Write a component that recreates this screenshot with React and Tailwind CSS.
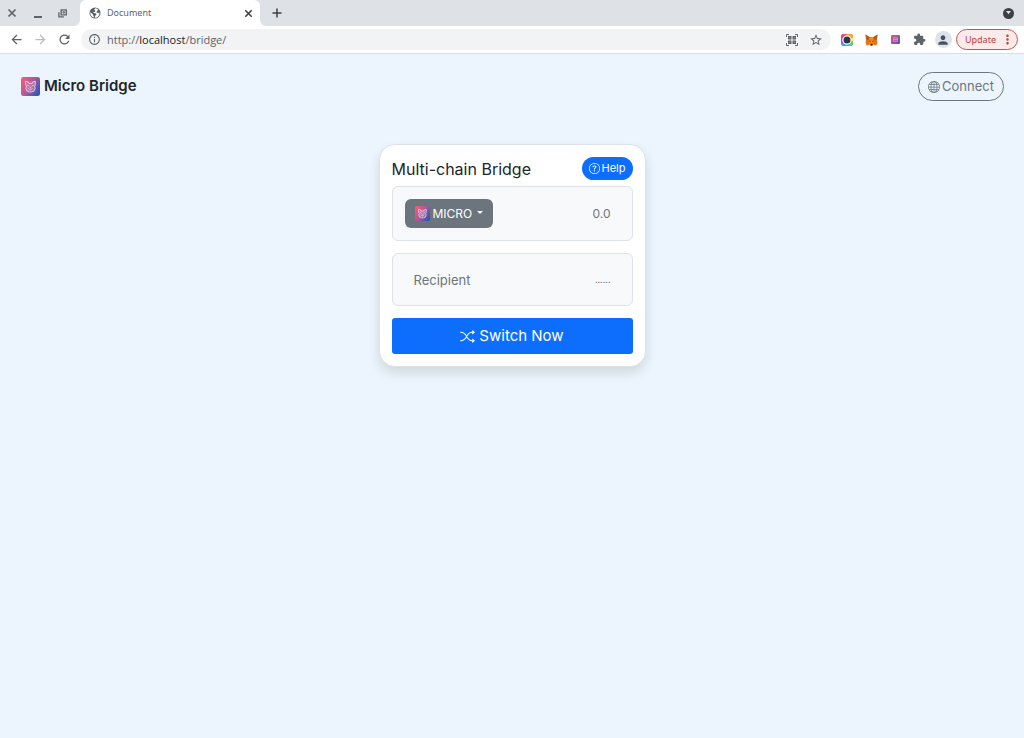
import React, { useState } from 'react';
import { BsGlobe, BsQuestionCircle, BsShuffle } from 'react-icons/bs';
import {
    MdArrowBack,
    MdArrowForward,
    MdRefresh,
    MdExtension,
    MdPerson,
    MdMoreVert,
    MdOutlineInfo,
    MdStarOutline
} from 'react-icons/md';

const TOKENS = ['MICRO'];

const MicroLogo = ({ id, className }) => (
    <svg viewBox="0 0 20 20" className={className} aria-hidden="true">
        <defs>
            <linearGradient id={id} x1="0" y1="0.2" x2="1" y2="0.8">
                <stop offset="0" stopColor="#f8567c" />
                <stop offset="0.5" stopColor="#a75a98" />
                <stop offset="1" stopColor="#2458b8" />
            </linearGradient>
        </defs>
        <rect width="20" height="20" rx="2.5" fill={`url(#${id})`} />
        <path d="M5 4.5h10v11H5z" fill="#f3d9ea" fillOpacity="0.2" />
        <g fill="none" stroke="#f3d9ea" strokeWidth="0.9" strokeLinecap="round" strokeLinejoin="round">
            <path d="M5 4.5l2.5.7.8 1.700h3.400l.8-1.700 2.500-.7v4l-.8 1.500.8 2-1.500 2.800-2 .9h-3l-2-.9L5 12l.8-2L5 8.500z" />
            <path d="M7 8.800l1.500.7M13 8.800l-1.500.7M8 12.300c1 1.400 3 1.400 4 0M9.500 11.300h1" />
        </g>
    </svg>
);

const CrossIcon = ({ className }) => (
    <svg viewBox="0 0 12 12" className={className} fill="none" stroke="currentColor" strokeWidth="1.7" aria-hidden="true">
        <path d="M2.500 2.500l7 7M9.500 2.500l-7 7" />
    </svg>
);

const PlusIcon = () => (
    <svg viewBox="0 0 14 14" className="size-[14px]" fill="none" stroke="#3c4043" strokeWidth="1.5" aria-hidden="true">
        <path d="M7 2.500v9M2.500 7h9" />
    </svg>
);

const FoxIcon = () => (
    <svg viewBox="0 0 24 22" className="h-3 w-[13px]" aria-hidden="true">
        <path fill="#e2761b" d="M1 1l8 5h6l8-5-1 9 1 6-2 5-6-1-2 2h-2l-2-2-6 1-2-5 1-6z" />
        <path fill="#b85b1c" d="M1 1l8 5-2 5-5-1zM23 1l-8 5 2 5 5-1z" />
        <path fill="#f6851b" d="M9 6h6l2 6-2 7H9l-2-7z" />
        <path fill="#322b2a" d="M7 12l3 1v2zM17 12l-3 1v2zM10 18h4l-.5 3h-3z" />
        <path fill="#d7c1b3" d="M5 20l4-1 1 2zM19 20l-4-1-1 2z" />
    </svg>
);

const WheelIcon = () => (
    <svg viewBox="0 0 24 24" className="size-3" aria-hidden="true">
        <rect width="24" height="24" rx="6" fill="#b446e8" />
        <path d="M12 12L0 5a5 5 0 0 1 5-5h7z" fill="#f34a6b" />
        <path d="M12 12L11 0h8a5 5 0 0 1 5 5v4z" fill="#ff9d2e" />
        <path d="M12 12L24 7v9z" fill="#ffe04a" />
        <path d="M12 12l12 2v5a5 5 0 0 1-5 5h-4z" fill="#55cf70" />
        <path d="M12 12l4 12H5a5 5 0 0 1-4-3z" fill="#31a9f5" />
        <circle cx="12" cy="12" r="9.5" fill="#fff" />
        <circle cx="12" cy="12" r="7" fill="#2c3540" />
    </svg>
);

const QrIcon = () => (
    <svg viewBox="0 0 12 12" className="size-3" fill="none" stroke="#5f6368" aria-hidden="true">
        <path d="M.5 3V.5H3M9 .5h2.500V3M11.500 9v2.500H9M3 11.500H.5V9" />
        <path fill="#5f6368" stroke="none" d="M2 2h3.500v3.500H2zM6.500 2H10v3.500H6.500zM2 6.500h3.500V10H2zM6.500 6.500H10V10H6.500z" />
        <path stroke="#b8babd" strokeWidth="0.8" d="M3.300 3.800h1M7.800 3.800h1M3.300 8.200h1M7.800 8.200h1" />
    </svg>
);

const PageIcon = () => (
    <svg viewBox="0 0 12 12" className="size-3" aria-hidden="true">
        <circle cx="6" cy="6" r="5.5" fill="#5f6368" />
        <path
            fill="#fff"
            d="M6.300 1.300L5.200 2.700l1.300 1-.8 1.300H4.400l.3 1.100 2.200.2.6 1.400-1.300 1-.4 2a4.700 4.700 0 0 0 4.700-4.200L9 5.600 8.300 6.200 7.400 5.300l.8-1.600L9.300 3A4.700 4.700 0 0 0 6.300 1.300zM1.400 5.300L3.900 7.300v1.100l.9.700v1.400A4.700 4.700 0 0 1 1.400 5.300z"
        />
    </svg>
);

// Curved foot on either side of the active tab
const TabFoot = ({ flip }) => (
    <svg viewBox="0 0 6 6" className={`size-[6px] self-end ${flip ? '-scale-x-100' : ''}`} aria-hidden="true">
        <path d="M6 0v6H0a6 6 0 0 0 6-6z" fill="#fff" />
    </svg>
);

const BrowserBar = () => (
    <div className="font-['Noto_Sans',sans-serif] text-[#5f6368]">
        <div className="flex h-[26px] items-center bg-[#dee1e6]">
            <div className="flex w-[74px] items-center gap-3 pl-[6px]">
                <button aria-label="Close window"><CrossIcon className="size-3" /></button>
                <button aria-label="Minimize" className="flex size-4 items-end justify-center pb-[3px]">
                    <span className="h-[2px] w-2 bg-[#5f6368]" />
                </button>
                <button aria-label="Restore">
                    <svg viewBox="0 0 10 10" className="size-[9px]" fill="none" stroke="#5f6368" strokeWidth="1.5">
                        <path d="M3.500 1h5.700v5.500H3.500zM6.500 8.800H1V3.500" />
                        <path strokeWidth="1" d="M5.500 3h1.700v1.500H5.500z" />
                    </svg>
                </button>
            </div>
            <TabFoot />
            <div className="flex h-full w-[180px] items-center rounded-t-md bg-white pr-[6px] pl-[9px]">
                <PageIcon />
                <span className="ml-[6px] flex-1 text-[9px]">Document</span>
                <button aria-label="Close tab"><CrossIcon className="size-[11px] text-[#3c4043]" /></button>
            </div>
            <TabFoot flip />
            <button aria-label="New tab" className="ml-1"><PlusIcon /></button>
            <button aria-label="Search tabs" className="mr-[10px] ml-auto flex size-[11px] items-center justify-center rounded-full bg-[#3c4043]">
                <svg viewBox="0 0 6 4" className="w-[5px]" fill="#dee1e6"><path d="M0 0h6L3 4z" /></svg>
            </button>
        </div>

        <div className="flex h-7 items-center border-b border-[#d5dfe8] bg-white pr-[6px] pl-[9px]">
            <button aria-label="Back"><MdArrowBack className="size-[15px]" /></button>
            <button aria-label="Forward" className="ml-[9px]"><MdArrowForward className="size-[15px] text-[#babcbe]" /></button>
            <button aria-label="Reload" className="ml-[9px]"><MdRefresh className="size-[15px]" /></button>
            <div className="ml-[9px] flex h-[21px] flex-1 items-center rounded-full bg-[#f1f3f4] pr-2 pl-[7px]">
                <MdOutlineInfo className="size-[13px]" />
                <a href="http://localhost/bridge/" className="ml-[6px] flex-1 font-['Open_Sans',sans-serif] text-[11px] leading-4">
                    http://<span className="text-[#202124]">localhost</span>/bridge/
                </a>
                <button aria-label="QR code"><QrIcon /></button>
                <button aria-label="Bookmark" className="ml-[11px]"><MdStarOutline className="size-[14px]" /></button>
            </div>
            <div className="ml-[10px] flex items-center gap-3">
                <button aria-label="Wallet"><WheelIcon /></button>
                <button aria-label="Fox wallet"><FoxIcon /></button>
                <button aria-label="Micro">
                    <svg viewBox="0 0 10 10" className="mx-px size-[9px]">
                        <defs>
                            <linearGradient id="ext" x1="0" y1="0" x2="1" y2="1">
                                <stop offset="0" stopColor="#f0567c" />
                                <stop offset="1" stopColor="#405bc0" />
                            </linearGradient>
                        </defs>
                        <rect width="10" height="10" rx="1" fill="url(#ext)" />
                        <path d="M3 3h4v4H3zM3 5h4" fill="#b45aa0" stroke="#dca8dc" strokeWidth="0.8" />
                    </svg>
                </button>
                <button aria-label="Extensions"><MdExtension className="size-[13px]" /></button>
            </div>
            <button aria-label="Profile" className="ml-[9px] flex size-[17px] items-center justify-center rounded-full bg-[#dee3ea]">
                <MdPerson className="size-[14px] text-[#47515e]" />
            </button>
            <button className="ml-1 flex h-[21px] items-center rounded-full border border-[#c5534b] bg-[#fcebea] pr-[2px] pl-2 text-[9px] text-[#c5403a]">
                Update
                <MdMoreVert className="ml-1 size-[15px]" />
            </button>
        </div>
    </div>
);

const BridgeCard = () => {
    const [token, setToken] = useState(TOKENS[0]);
    const [amount, setAmount] = useState('');
    const [recipient, setRecipient] = useState('');

    return (
        <form
            onSubmit={(e) => e.preventDefault()}
            className="mx-auto flex w-[267px] flex-col gap-3 rounded-2xl border border-[#dee2e6] bg-white p-3 shadow-[0_6px_12px_rgba(0,0,0,0.12)]"
        >
            <div className="flex flex-col gap-[6px]">
                <div className="flex items-center justify-between">
                    <h1 className="text-[16px] leading-5">Multi-chain Bridge</h1>
                    <button type="button" className="flex h-[23px] items-center gap-[2px] rounded-full bg-[#0d6efd] px-[7px] text-[11px] text-white">
                        <BsQuestionCircle className="size-[11px]" />
                        Help
                    </button>
                </div>
                <div className="flex h-[55px] items-center justify-between rounded-md border border-[#dee2e6] bg-[#f8f9fa] pr-[21px] pl-3">
                    <div className="relative flex h-[29px] items-center rounded-md bg-[#6c757d] text-white">
                        <MicroLogo id="token-logo" className="pointer-events-none absolute left-[10px] size-[15px]" />
                        <select
                            aria-label="Token"
                            value={token}
                            onChange={(e) => setToken(e.target.value)}
                            className="h-full w-[88px] appearance-none rounded-md bg-transparent pl-7 text-[12px]"
                        >
                            {TOKENS.map((t) => (
                                <option key={t}>{t}</option>
                            ))}
                        </select>
                        <span className="pointer-events-none absolute top-3 right-[10px] border-x-[3px] border-t-[3px] border-x-transparent border-t-white" />
                    </div>
                    <input
                        aria-label="Amount"
                        value={amount}
                        onChange={(e) => setAmount(e.target.value)}
                        placeholder="0.0"
                        className="w-24 text-right text-[12px] outline-none placeholder:text-[#6c757d]"
                    />
                </div>
            </div>

            <div className="flex h-[53px] items-center justify-between rounded-md border border-[#dee2e6] bg-[#f8f9fa] px-[21px]">
                <label htmlFor="recipient" className="text-[13px] leading-5 text-[#6c757d]">Recipient</label>
                <input
                    id="recipient"
                    value={recipient}
                    onChange={(e) => setRecipient(e.target.value)}
                    placeholder="......"
                    className="w-24 text-right text-[9px] outline-none placeholder:text-[#6c757d]"
                />
            </div>

            <button className="flex h-9 items-center justify-center gap-1 rounded-[3px] bg-[#0d6efd] text-[15px] text-white">
                <BsShuffle className="size-[15px]" />
                Switch Now
            </button>
        </form>
    );
};

const App = () => (
    <div className="min-h-screen bg-[#ecf5fd] font-['Inter',sans-serif] text-[#212529]">
        <BrowserBar />
        <header className="flex items-center justify-between pt-[18px] pr-5 pl-[21px]">
            <a href="/bridge/" className="flex items-center gap-1 text-[15px] font-semibold">
                <MicroLogo id="brand-logo" className="size-[19px]" />
                Micro Bridge
            </a>
            <button className="flex h-[29px] items-center gap-[2px] rounded-full border border-[#6c757d] px-[9px] text-[13px] text-[#6c757d]">
                <BsGlobe className="size-3" />
                Connect
            </button>
        </header>
        <main className="px-3 pt-[43px]">
            <BridgeCard />
        </main>
    </div>
);

export default App;
